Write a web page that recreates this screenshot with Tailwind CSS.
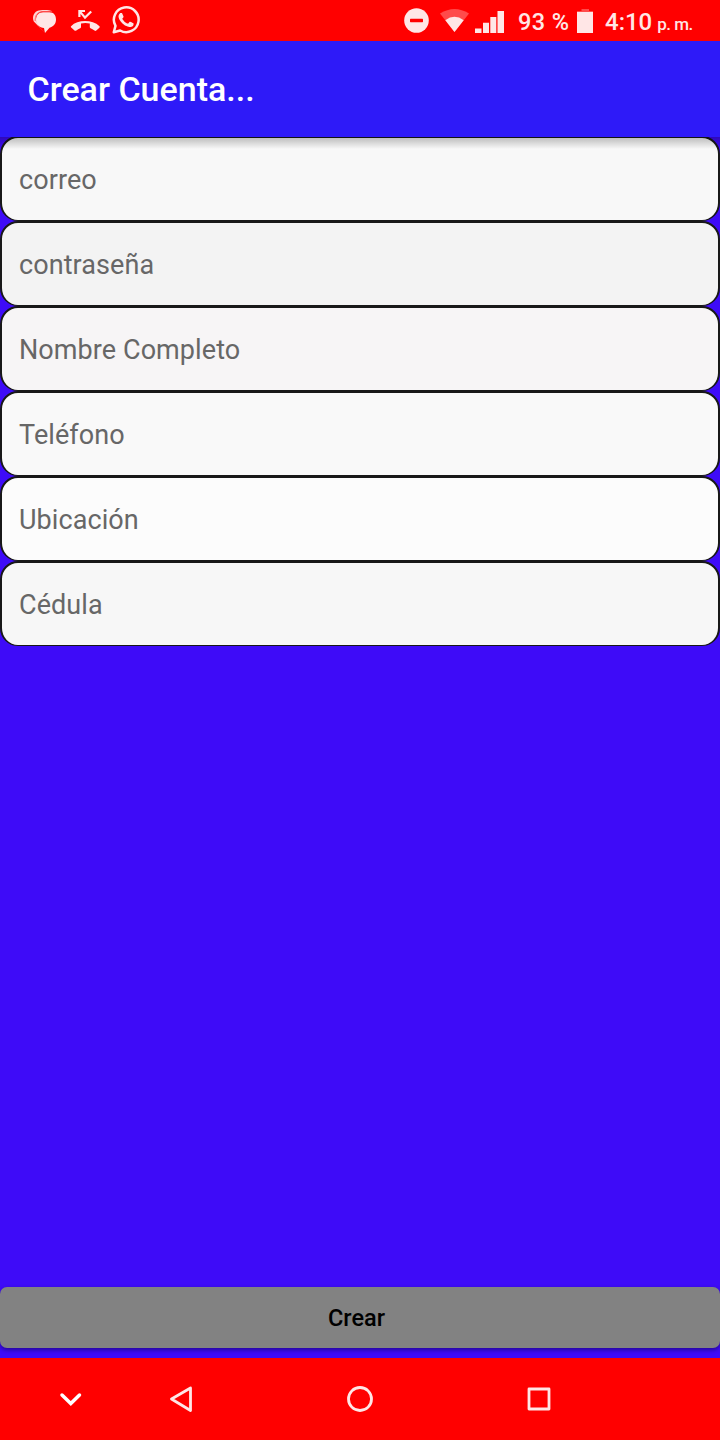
<!DOCTYPE html>
<html lang="es">
<head>
<meta charset="utf-8">
<title>Crear Cuenta</title>
<script src="https://cdn.jsdelivr.net/npm/@tailwindcss/browser@4"></script>
</head>
<body class="w-[720px] h-[1440px] flex flex-col overflow-hidden bg-[#3e0bf8] font-['Roboto',sans-serif]">
  <header class="h-[41px] shrink-0 bg-[#ff0000] flex items-center text-[#ffe6e6] font-medium">
    <svg class="ml-8 w-[26px] h-[41px]" viewBox="32 0 26 41"><path d="M43 12.200H49.500C53.500 12.200 56 15 56 19.500C56 24 53.500 26.500 49.500 27.800L45 33L44 28C39.500 27.500 36 24.500 36 20C36 15.500 38.500 12.200 43 12.200Z" fill="#ffe6e6"/><path d="M52.500 11.300C49 9.500 41 9.500 37.200 11C33.200 13 32.200 17.500 33.800 21.500L45 33L38.500 26L36 20C35.500 15 38.500 11.700 43 11.300Z" fill="#ffd4d4"/><path d="M35.200 21C34.800 15.500 37.500 11.800 43 11.600H52" fill="none" stroke="#ff5050" stroke-width=".8"/></svg>
    <svg class="ml-3 w-[32px] h-[41px]" viewBox="70 0 32 41"><path d="M71 26.200C78 19.400 92 19.400 99.500 26.200Q100 27 99.400 27.700L96.300 30.600Q95.400 31.200 94.500 30.500Q92.500 29 90.500 28.200Q89.800 27.800 89.800 27V23.600Q85.300 22.300 81 23.600V27Q81 27.800 80.200 28.200Q78.200 29 76.300 30.500Q75.300 31.200 74.500 30.500L71.200 27.600Q70.500 27 71 26.200Z" fill="#ffe6e6"/><path d="M79.400 17V11H85M80 11.600L85 17.600L91.200 11.500" fill="none" stroke="#ffe6e6" stroke-width="2.200"/></svg>
    <svg class="ml-[9px] mb-px w-[30px] h-[30px]" viewBox="0 0 24 24" fill="#ffe6e6"><path d="M17.472 14.382c-.297-.149-1.758-.867-2.030-.967-.273-.099-.471-.148-.670.150-.197.297-.767.966-.940 1.164-.173.199-.347.223-.644.075-.297-.150-1.255-.463-2.390-1.475-.883-.788-1.480-1.761-1.653-2.059-.173-.297-.018-.458.130-.606.134-.133.298-.347.446-.520.149-.174.198-.298.298-.497.099-.198.050-.371-.025-.520-.075-.149-.669-1.612-.916-2.207-.242-.579-.487-.500-.669-.510-.173-.008-.371-.010-.570-.010-.198 0-.520.074-.792.372-.272.297-1.040 1.016-1.040 2.479 0 1.462 1.065 2.875 1.213 3.074.149.198 2.096 3.200 5.077 4.487.709.306 1.262.489 1.694.625.712.227 1.360.195 1.871.118.571-.085 1.758-.719 2.006-1.413.248-.694.248-1.289.173-1.413-.074-.124-.272-.198-.570-.347"/><path d="M2.200 21.800L3.600 16.700A9.900 9.900 0 1 1 7.300 20.400Z" fill="none" stroke="#ffe6e6" stroke-width="2" stroke-linejoin="round"/></svg>
    <svg class="ml-[262px] w-[104px] h-[41px] shrink-0" viewBox="403 0 104 41"><circle cx="416.500" cy="20.500" r="12.300" fill="#ffe6e6"/><rect x="410" y="18.800" width="13" height="3.400" rx=".6" fill="#f00"/><path d="M440 13.500Q454.500 4.500 469 13.500L454.500 32Z" fill="#ff4b4b"/><path d="M445.300 20.200Q454.500 13.500 463.700 20.200L454.500 32Z" fill="#ffe6e6"/><path d="M475 28.500h6.500V33H475ZM483 22.700h6V33h-6ZM490.300 17h6v16h-6ZM497.500 11h6.500v22h-6.500Z" fill="#ffe6e6"/></svg>
    <span class="w-[59px] ml-[11px] mt-[4px] text-[23.500px] tracking-[0.4px] leading-none whitespace-nowrap">93 %</span>
    <svg class="w-4 h-[41px] shrink-0" viewBox="577 0 16 41"><path d="M581.500 9h7.500v2h4v2h-16v-2h4.500Z" fill="#ff4b4b"/><path d="M577 12h16v21h-16Z" fill="#ffe6e6"/></svg>
    <span class="ml-3 mt-[3px] text-[24px] leading-none whitespace-nowrap">4:10</span>
    <span class="ml-[5px] mt-[7px] text-[17px] tracking-[-0.5px] leading-none whitespace-nowrap">p. m.</span>
  </header>
  <div class="relative h-24 shrink-0 bg-[#2e1af8] pl-[27.500px] flex items-center text-white text-[34px] font-medium"><h1>Crear Cuenta...</h1><div class="absolute top-full left-0 w-full h-3 bg-linear-to-b from-black/25 to-transparent z-10"></div></div>
  <main class="flex-1 flex flex-col">
    <div class="-mt-px flex flex-col text-[27px] tracking-[0.08px] text-[#676767]">
      <div class="h-[85px] border-2 border-b border-[#181818] rounded-[18px] bg-[#f8f8f8] pl-[17px] pt-[3px] flex items-center">correo</div>
      <div class="h-[85px] border-2 border-b border-[#181818] rounded-[18px] bg-[#f3f3f3] pl-[17px] pt-[3px] flex items-center">contraseña</div>
      <div class="h-[85px] border-2 border-b border-[#181818] rounded-[18px] bg-[#f7f5f6] pl-[17px] pt-[3px] flex items-center">Nombre Completo</div>
      <div class="h-[85px] border-2 border-b border-[#181818] rounded-[18px] bg-[#f9f9f9] pl-[17px] pt-[3px] flex items-center">Teléfono</div>
      <div class="h-[85px] border-2 border-b border-[#181818] rounded-[18px] bg-[#fcfcfc] pl-[17px] pt-[3px] flex items-center">Ubicación</div>
      <div class="h-[85px] border-2 border-b border-[#181818] rounded-[18px] bg-[#f7f7f7] pl-[17px] pt-[3px] flex items-center">Cédula</div>
    </div>
    <button class="mt-auto mb-[10px] h-[61px] rounded-[7px] bg-[#828282] text-black text-[23.500px] font-medium pr-[7px] pt-[3px] shadow-[0_2px_4px_rgba(0,0,0,0.4)]">Crear</button>
  </main>
  <nav class="h-[82px] shrink-0 bg-[#ff0000] flex items-center">
    <svg class="ml-[58px] w-6 h-6" viewBox="58 1387 24 24" fill="none" stroke="#fff" stroke-width="3.500" stroke-linecap="round"><path d="M62 1395L70.800 1403.500L79.500 1395"/></svg>
    <svg class="ml-[86px] w-7 h-7" viewBox="168 1385 28 28" fill="none" stroke="#ffe6e6" stroke-width="2.800" stroke-linejoin="round"><path d="M190.500 1388L171.500 1399L190.500 1410.500Z"/></svg>
    <svg class="ml-[150px] w-7 h-7" viewBox="0 0 28 28" fill="none" stroke="#ffe6e6" stroke-width="2.800"><circle cx="14" cy="14" r="11.500"/></svg>
    <svg class="ml-[151px] w-7 h-7" viewBox="0 0 28 28" fill="none" stroke="#ffe6e6" stroke-width="2.800" stroke-linejoin="round"><rect x="4" y="4" width="20" height="20"/></svg>
  </nav>
</body>
</html>
